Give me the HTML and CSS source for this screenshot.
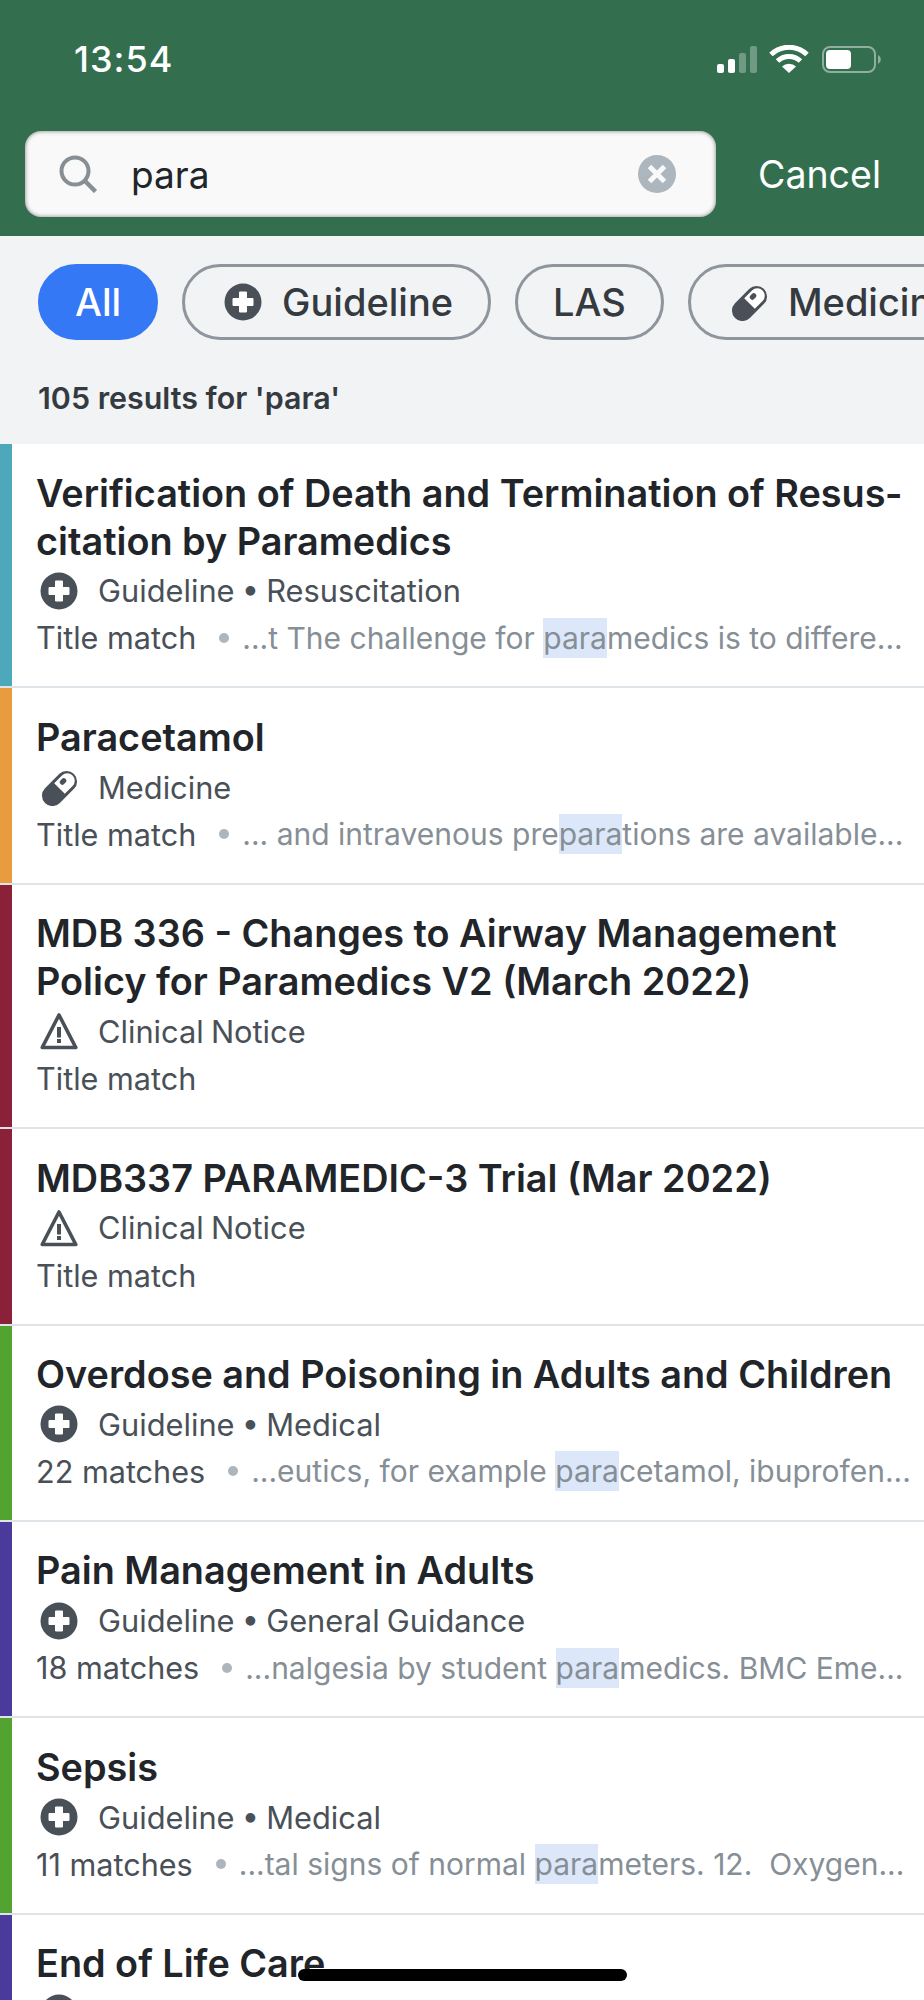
FILE: index.html
```html
<!DOCTYPE html>
<html lang="en">
<head>
  <meta charset="UTF-8">
  <meta name="viewport" content="width=device-width, initial-scale=1">
  <title>Search results</title>
  <link rel="stylesheet" href="styles.css">
</head>
<body>
  <svg class="icon-defs" width="0" height="0">
    <symbol id="icon-guideline" viewBox="0 0 38 38">
      <circle cx="19" cy="19" r="18.500" fill="currentColor"/>
      <path d="M15.500 9h7v6.500H29v7h-6.500V29h-7v-6.500H9v-7h6.500z" fill="#fff" stroke="#fff" stroke-width="1" stroke-linejoin="round"/>
    </symbol>
    <symbol id="icon-medicine" viewBox="0 0 38 38">
      <g transform="translate(.5 1.500) rotate(-45 19 19)">
        <rect x="-1.500" y="8.500" width="41" height="21" rx="10.500" fill="currentColor"/>
        <path d="M19 11.500h11a7.500 7.500 0 0 1 0 15H19z" fill="#fff"/>
        <rect x="23" y="14" width="7" height="5" rx="2" fill="currentColor"/>
      </g>
    </symbol>
    <symbol id="icon-notice" viewBox="0 0 38 38">
      <path d="M19 3 35.800 35.500H2.200z" fill="none" stroke="currentColor" stroke-width="3.600" stroke-linejoin="round"/>
      <rect x="17" y="15" width="4" height="10.500" fill="currentColor"/>
      <rect x="17" y="27" width="4" height="4" fill="currentColor"/>
    </symbol>
  </svg>

  <div class="app">
    <header class="top">
      <div class="status-bar">
        <span class="clock">13:54</span>
        <svg class="status-icons" width="166" height="29" viewBox="0 0 166 29">
          <rect x="1" y="19" width="7" height="9" rx="2" fill="#fff"/>
          <rect x="12" y="14" width="7" height="14" rx="2" fill="#fff"/>
          <rect x="23" y="8" width="7" height="20" rx="2" fill="#fff" opacity=".3"/>
          <rect x="34" y="1" width="7" height="27" rx="2" fill="#fff" opacity=".3"/>
          <path d="M55 9.500a26 26 0 0 1 36 0" fill="none" stroke="#fff" stroke-width="5"/>
          <path d="M61.500 16a17 17 0 0 1 23 0" fill="none" stroke="#fff" stroke-width="5"/>
          <path d="M66 21.500a10 10 0 0 1 14 0L73 28z" fill="#fff"/>
          <rect x="107" y="2" width="52" height="25" rx="7" fill="none" stroke="#fff" stroke-opacity=".45" stroke-width="2"/>
          <rect x="110" y="5" width="25" height="19" rx="4" fill="#fff"/>
          <path d="M162 10a5 5 0 0 1 0 9z" fill="#fff" fill-opacity=".45"/>
        </svg>
      </div>
      <div class="search-row">
        <div class="search-box">
          <svg class="search-icon" width="39" height="38" viewBox="0 0 39 38">
            <circle cx="16" cy="16" r="13.500" fill="none" stroke="#868e96" stroke-width="4"/>
            <path d="M26 26 36.500 36.500" stroke="#868e96" stroke-width="4.500"/>
          </svg>
          <span class="search-text">para</span>
          <svg class="clear-icon" width="38" height="38" viewBox="0 0 38 38">
            <circle cx="19" cy="19" r="19" fill="#adb5bd"/>
            <path d="M11.500 11.500l15 15M26.500 11.500l-15 15" stroke="#f8f9fa" stroke-width="5"/>
          </svg>
        </div>
        <span class="cancel">Cancel</span>
      </div>
    </header>

    <div class="filters">
      <span class="chip chip-active">All</span>
      <span class="chip"><svg class="chip-icon"><use href="#icon-guideline"/></svg>Guideline</span>
      <span class="chip">LAS</span>
      <span class="chip"><svg class="chip-icon"><use href="#icon-medicine"/></svg>Medicine</span>
    </div>
    <p class="result-count">105 results for 'para'</p>

    <ul class="results">
      <li class="result">
        <div class="bar bar-teal"></div>
        <div class="result-body">
          <h2 class="title">Verification of Death and Termination of Resus&shy;citation by Paramedics</h2>
          <div class="meta"><svg class="meta-icon"><use href="#icon-guideline"/></svg>Guideline • Resuscitation</div>
          <div class="match">
            <span class="match-label">Title match</span>
            <span class="dot"></span>
            <span class="snippet">...t The challenge for <mark>para</mark>medics is to differe...</span>
          </div>
        </div>
      </li>
      <li class="result">
        <div class="bar bar-orange"></div>
        <div class="result-body">
          <h2 class="title">Paracetamol</h2>
          <div class="meta"><svg class="meta-icon"><use href="#icon-medicine"/></svg>Medicine</div>
          <div class="match">
            <span class="match-label">Title match</span>
            <span class="dot"></span>
            <span class="snippet">... and intravenous pre<mark>para</mark>tions are available...</span>
          </div>
        </div>
      </li>
      <li class="result">
        <div class="bar bar-maroon"></div>
        <div class="result-body">
          <h2 class="title">MDB 336 - Changes to Airway Management Policy for Paramedics V2 (March 2022)</h2>
          <div class="meta"><svg class="meta-icon"><use href="#icon-notice"/></svg>Clinical Notice</div>
          <div class="match">
            <span class="match-label">Title match</span>
          </div>
        </div>
      </li>
      <li class="result">
        <div class="bar bar-maroon"></div>
        <div class="result-body">
          <h2 class="title">MDB337 PARAMEDIC-3 Trial (Mar 2022)</h2>
          <div class="meta"><svg class="meta-icon"><use href="#icon-notice"/></svg>Clinical Notice</div>
          <div class="match">
            <span class="match-label">Title match</span>
          </div>
        </div>
      </li>
      <li class="result">
        <div class="bar bar-green"></div>
        <div class="result-body">
          <h2 class="title">Overdose and Poisoning in Adults and Children</h2>
          <div class="meta"><svg class="meta-icon"><use href="#icon-guideline"/></svg>Guideline • Medical</div>
          <div class="match">
            <span class="match-label">22 matches</span>
            <span class="dot"></span>
            <span class="snippet">...eutics, for example <mark>para</mark>cetamol, ibuprofen...</span>
          </div>
        </div>
      </li>
      <li class="result">
        <div class="bar bar-purple"></div>
        <div class="result-body">
          <h2 class="title">Pain Management in Adults</h2>
          <div class="meta"><svg class="meta-icon"><use href="#icon-guideline"/></svg>Guideline • General Guidance</div>
          <div class="match">
            <span class="match-label">18 matches</span>
            <span class="dot"></span>
            <span class="snippet">...nalgesia by student <mark>para</mark>medics. BMC Eme...</span>
          </div>
        </div>
      </li>
      <li class="result">
        <div class="bar bar-green"></div>
        <div class="result-body">
          <h2 class="title">Sepsis</h2>
          <div class="meta"><svg class="meta-icon"><use href="#icon-guideline"/></svg>Guideline • Medical</div>
          <div class="match">
            <span class="match-label">11 matches</span>
            <span class="dot"></span>
            <span class="snippet">...tal signs of normal <mark>para</mark>meters. 12.&nbsp; Oxygen...</span>
          </div>
        </div>
      </li>
      <li class="result">
        <div class="bar bar-purple"></div>
        <div class="result-body">
          <h2 class="title">End of Life Care</h2>
          <div class="meta"><svg class="meta-icon"><use href="#icon-guideline"/></svg>Guideline • General Guidance</div>
        </div>
      </li>
    </ul>

    <div class="home-indicator"></div>
  </div>
</body>
</html>
```

FILE: styles.css
```css
* {
  box-sizing: border-box;
}
body {
  margin: 0;
  font-family: 'Inter', 'Liberation Sans', sans-serif;
  background: #f1f3f5;
  color: #212529;
}
.icon-defs {
  position: absolute;
}
.app {
  position: relative;
  height: 2000px;
  overflow: hidden;
}

/* green header */
.top {
  background: #336f4f;
  height: 236px;
  padding-top: 44px;
}
.status-bar {
  display: flex;
  justify-content: space-between;
  align-items: center;
  height: 30px;
  padding: 0 42px 0 74px;
  margin-bottom: 57px;
}
.clock {
  font-size: 36px;
  font-weight: 500;
  letter-spacing: 1px;
  color: #fff;
}
.search-row {
  display: flex;
  align-items: center;
  padding-left: 25px;
}
.search-box {
  display: flex;
  align-items: center;
  width: 691px;
  height: 86px;
  padding: 0 40px 0 34px;
  background: #f8f9f8;
  border-radius: 16px;
  box-shadow: inset 0 0 4px rgba(0, 0, 0, 0.5);
}
.search-text {
  flex: 1;
  margin-left: 33px;
  font-size: 37px;
  color: #212529;
}
.cancel {
  margin-left: 42px;
  font-size: 37.5px;
  color: #fff;
}

/* filter chips */
.filters {
  display: flex;
  gap: 24px;
  padding: 28px 0 0 38px;
  overflow: hidden;
}
.chip {
  display: flex;
  align-items: center;
  flex-shrink: 0;
  height: 76px;
  padding: 0 35px;
  border: 3px solid #8e959c;
  border-radius: 38px;
  font-size: 38px;
  font-weight: 500;
  color: #343a40;
}
.chip-active {
  background: #3478f6;
  border-color: #3478f6;
  color: #fff;
  padding: 0 34px;
}
.chip-icon {
  width: 38px;
  height: 38px;
  margin: 0 20px 0 4px;
  color: #495057;
}
.result-count {
  margin: 0;
  padding: 40px 38px 0;
  height: 104px;
  font-size: 30.4px;
  line-height: 36px;
  font-weight: 600;
  color: #343a40;
}

/* results */
.results {
  margin: 0;
  padding: 0;
  list-style: none;
  background: #fff;
}
.result {
  display: flex;
  border-bottom: 2px solid #dfe4e8;
}
.bar {
  width: 12px;
  flex-shrink: 0;
}
.bar-teal { background: #4ea8bb; }
.bar-orange { background: #e99c3d; }
.bar-maroon { background: #8a2139; }
.bar-green { background: #52a32f; }
.bar-purple { background: #4a3a9c; }
.result-body {
  flex: 1;
  min-width: 0;
  padding: 24.5px 14px 27.5px 24px;
}
.title {
  margin: 0;
  font-size: 37.8px;
  line-height: 48px;
  font-weight: 600;
  color: #212529;
}
.meta {
  display: flex;
  align-items: center;
  height: 52.4px;
  font-size: 30.8px;
  word-spacing: -1.5px;
  color: #495057;
}
.meta-icon {
  width: 38px;
  height: 38px;
  margin: 0 20px 0 4px;
  color: #495057;
  flex-shrink: 0;
}
.match {
  display: flex;
  align-items: center;
  height: 42px;
}
.match-label {
  font-size: 30.6px;
  color: #495057;
  flex-shrink: 0;
}
.dot {
  width: 10px;
  height: 10px;
  margin: 0 13px 0 23px;
  border-radius: 50%;
  background: #adb5bd;
  flex-shrink: 0;
}
.snippet {
  flex: 1;
  min-width: 0;
  overflow: hidden;
  white-space: nowrap;
  font-size: 30px;
  line-height: 42px;
  color: #868e96;
}
.snippet mark {
  display: inline-block;
  line-height: 40px;
  background: #dce8fa;
  color: #868e96;
}
.home-indicator {
  position: absolute;
  left: 298px;
  top: 1969px;
  width: 329px;
  height: 12px;
  border-radius: 6px;
  background: #000;
}
```
